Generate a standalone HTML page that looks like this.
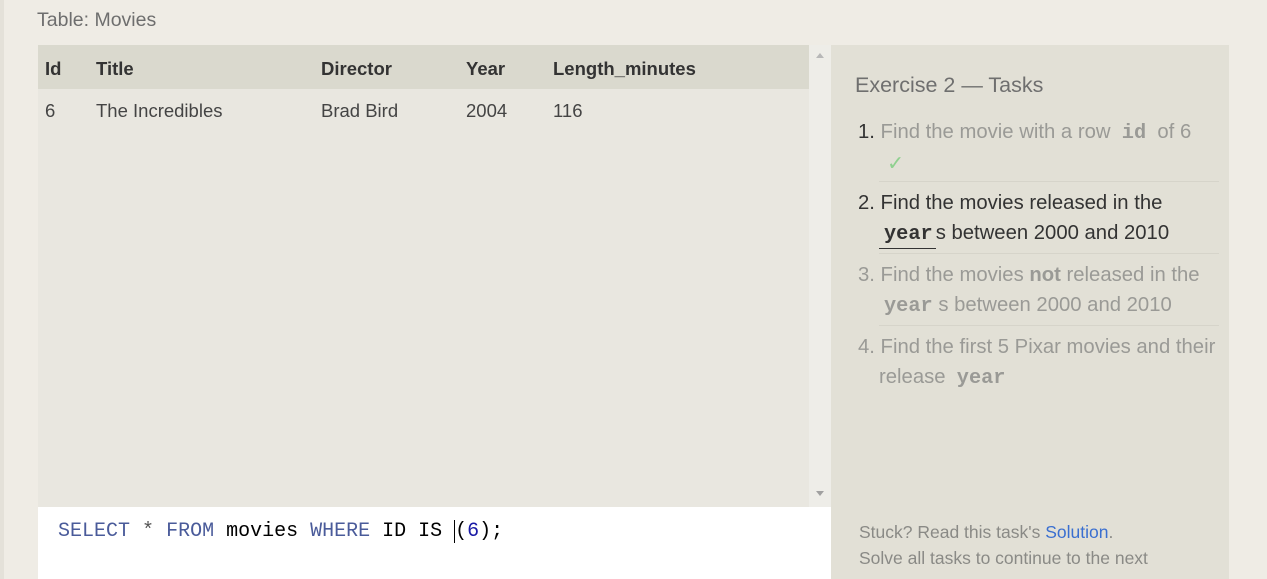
<!DOCTYPE html>
<html><head><style>
*{margin:0;padding:0;box-sizing:border-box}
body{width:1267px;height:579px;overflow:hidden;background:#efece5;font-family:"Liberation Sans",sans-serif;position:relative}
.lb{position:absolute;left:0;top:0;width:4px;height:579px;background:#e4e1d9}
.title{position:absolute;left:37px;top:9px;font-size:19.5px;color:#6e6e6e}
.tbl{position:absolute;left:38px;top:45px;width:771px;height:462px;background:#e9e7e0}
.hdr{position:absolute;left:0;top:0;width:771px;height:44px;background:#dad9ce}
.c{position:absolute;font-size:18.5px;white-space:nowrap}
.h{font-weight:bold;color:#333;top:13px}
.r{color:#444;top:55px}
.sb{position:absolute;left:809px;top:45px;width:22px;height:462px;background:#eeede8}
.ed{position:absolute;left:38px;top:507px;width:793px;height:72px;background:#fff;font-family:"Liberation Mono",monospace;font-size:20px}
.rp{position:absolute;left:831px;top:45px;width:398px;height:534px;background:#e2e0d6}
.t{position:absolute;font-size:20.3px;white-space:nowrap;color:#9a9a96}
.m{font-family:"Liberation Mono",monospace;font-weight:bold}
.sep{position:absolute;left:48px;width:340px;height:1px;background:#d6d4ca}
</style></head><body>
<div class="lb"></div>
<div class="title">Table: Movies</div>
<div class="tbl">
<div class="hdr"></div>
<div class="c h" style="left:7px">Id</div>
<div class="c h" style="left:58px">Title</div>
<div class="c h" style="left:283px">Director</div>
<div class="c h" style="left:428px">Year</div>
<div class="c h" style="left:515px">Length_minutes</div>
<div class="c r" style="left:7px">6</div>
<div class="c r" style="left:58px">The Incredibles</div>
<div class="c r" style="left:283px">Brad Bird</div>
<div class="c r" style="left:428px">2004</div>
<div class="c r" style="left:515px">116</div>
</div>
<div class="sb"><div style="position:absolute;left:7px;top:8px;border:4px solid transparent;border-bottom:5px solid #b8b8b8;border-top:0"></div><div style="position:absolute;left:7px;top:446px;border:4px solid transparent;border-top:5px solid #a0a0a0;border-bottom:0"></div></div>
<div class="ed"><div style="position:absolute;left:20px;top:13px;white-space:pre"><span style="color:#4a5b9a">SELECT</span> <span style="color:#555">*</span> <span style="color:#4a5b9a">FROM</span> movies <span style="color:#4a5b9a">WHERE</span> ID IS <span style="border-left:1.5px solid #000">(</span><span style="color:#1a1aa6">6</span>);</div></div>
<div class="rp">
<div class="t" style="left:24px;top:28px;font-size:21.5px;color:#6f6f6f">Exercise 2 — Tasks</div>
<div class="t" style="left:27px;top:76px"><span style="color:#333">1.</span> Find the movie with a row&nbsp; <span class="m">id</span>&nbsp; of 6</div>
<div class="t" style="left:56px;top:106px;color:#8fd08f">✓</div>
<div class="sep" style="top:136px"></div>
<div class="t" style="left:27px;top:147px;color:#333">2. Find the movies released in the</div>
<div class="t" style="left:48px;top:177px;color:#333"><span class="m" style="border-bottom:1.5px solid #333;padding:0 3px 2px 5px">year</span>s between 2000 and 2010</div>
<div class="sep" style="top:208px"></div>
<div class="t" style="left:27px;top:219px">3. Find the movies <b>not</b> released in the</div>
<div class="t" style="left:53px;top:249px"><span class="m">year</span> s between 2000 and 2010</div>
<div class="sep" style="top:280px"></div>
<div class="t" style="left:27px;top:291px">4. Find the first 5 Pixar movies and their</div>
<div class="t" style="left:48px;top:321px">release&nbsp; <span class="m">year</span></div>
<div class="t" style="left:28px;top:477px;font-size:17.5px;color:#8a8a86">Stuck? Read this task's <span style="color:#3a6fd0">Solution</span>.</div>
<div class="t" style="left:28px;top:503px;font-size:17.5px;color:#8a8a86">Solve all tasks to continue to the next</div>
</div>
</body></html>
